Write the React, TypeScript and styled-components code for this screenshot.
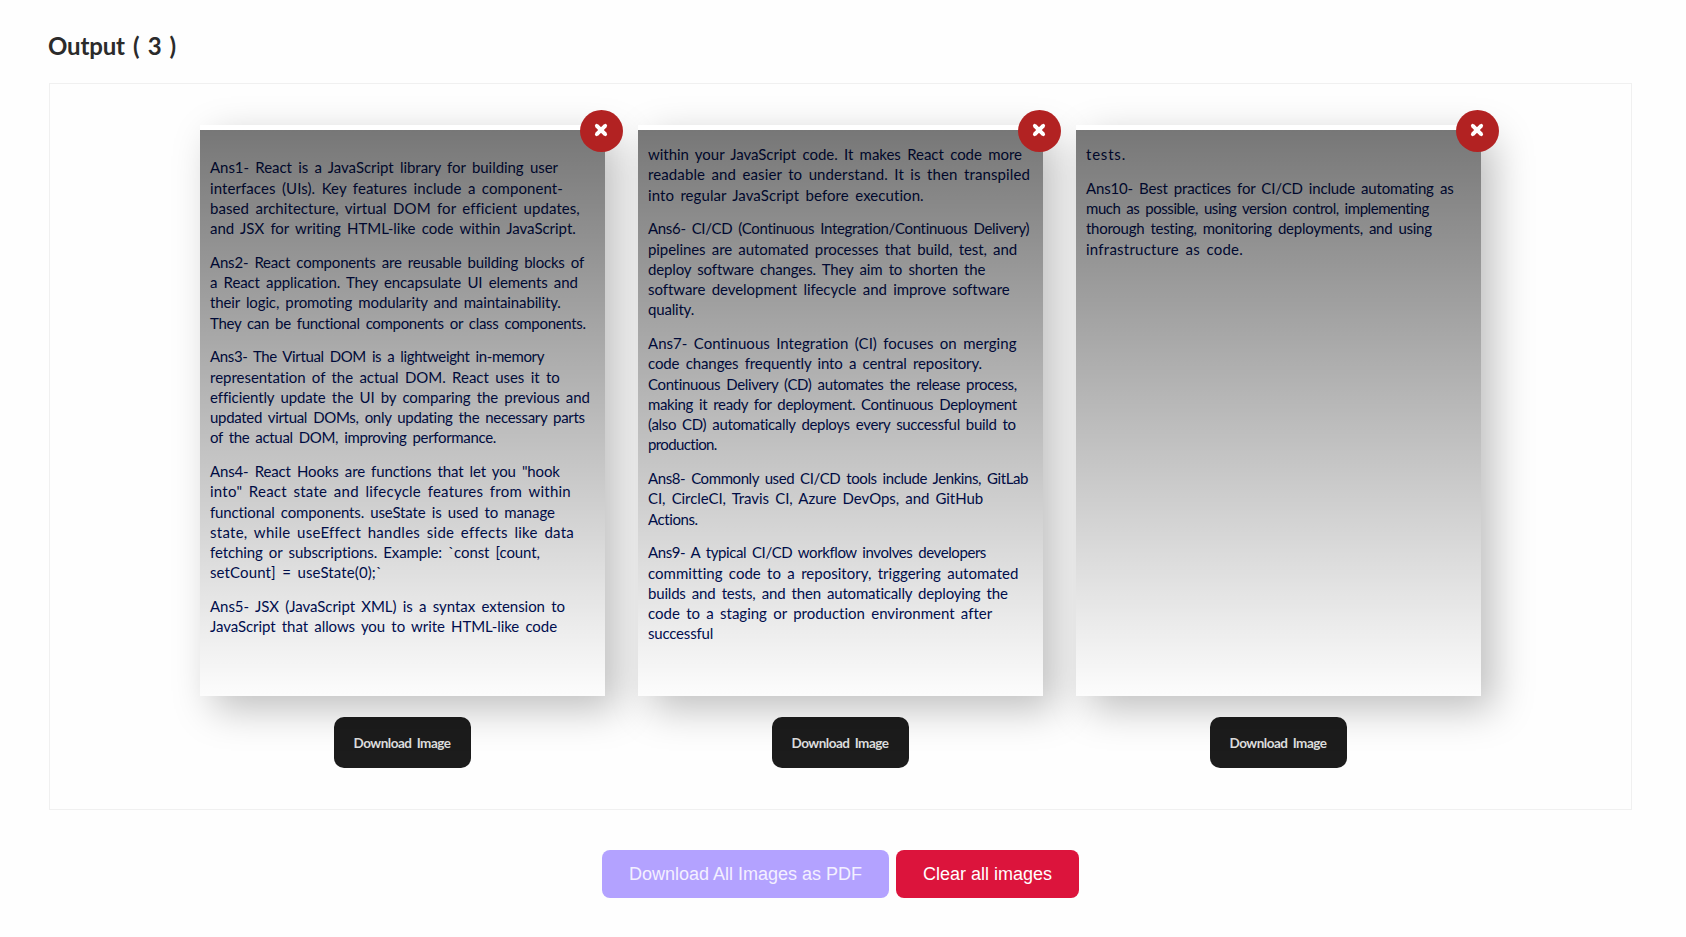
import React, { useLayoutEffect, useRef, useState } from 'react';
import styled, { createGlobalStyle } from 'styled-components';

const handwriting = `Lato, "Liberation Sans", cursive`;

const GlobalStyle = createGlobalStyle`
  * { box-sizing: border-box; }
  body { margin: 0; background: #fefefe; }
`;

const Page = styled.main`
  height: 937px;
  padding: 32px 54px 0 49px;
  overflow: hidden;
`;

const Heading = styled.h2`
  margin: 0 0 0 -1px;
  height: 51px;
  line-height: 28px;
  font-family: ${handwriting};
  font-size: 24px;
  font-weight: 700;
  color: #2b2b2b;
`;

const Panel = styled.section`
  display: flex;
  justify-content: center;
  gap: 33px;
  height: 727px;
  padding-top: 41px;
  border: 1px solid #f0f0f0;
`;

const Card = styled.article`
  position: relative;
  display: flex;
  flex-direction: column;
  align-items: center;
  gap: 21px;
  width: 405px;
`;

const Sheet = styled.div<{ $continued: boolean }>`
  position: relative;
  width: 405px;
  height: 571px;
  padding: ${(p) => (p.$continued ? '19px' : '32.4px')} 10px 0;
  background: #fff;
  box-shadow: 13px 13px 37px rgba(0, 0, 0, 0.25);
  font-family: ${handwriting};
  font-size: 15px;
  line-height: 20.25px;
  color: #000f55;

  &::after {
    content: '';
    position: absolute;
    inset: 5px 0 0;
    background: linear-gradient(rgba(0, 0, 0, 0.535), rgba(0, 0, 0, 0.01));
  }
`;

const Paragraph = styled.p`
  margin: 0 0 13.5px;
`;

const Line = styled.span`
  display: block;
  width: max-content;
  white-space: pre;
  word-spacing: 2.5px;
`;

const RemoveButton = styled.button`
  position: absolute;
  top: -15px;
  right: -17.5px;
  z-index: 2;
  display: flex;
  align-items: center;
  justify-content: center;
  width: 43px;
  height: 42px;
  padding: 0 0 3px;
  border: 0;
  border-radius: 50%;
  background: #b22222;
  color: #fff;
`;

const DownloadButton = styled.button`
  display: flex;
  align-items: center;
  justify-content: center;
  width: 137px;
  height: 51px;
  padding: 1px 1px 0 0;
  border: 0;
  border-radius: 10px;
  background: #1c1c1c;
  color: #dedede;
  font-family: ${handwriting};
  font-size: 13.5px;
  font-weight: 700;
`;

const Actions = styled.div`
  display: flex;
  justify-content: center;
  gap: 7px;
  padding-top: 40px;
`;

const ActionButton = styled.button<{ $width: number; $bg: string; $fg: string }>`
  width: ${(p) => p.$width}px;
  height: 48px;
  padding: 1px 0 0;
  border: 0;
  border-radius: 8px;
  background: ${(p) => p.$bg};
  color: ${(p) => p.$fg};
  font-family: 'Liberation Sans', Arial, sans-serif;
  font-size: 18px;
`;

type Row = [text: string, width: number];

/* Spreads the letters of one written line over the given width. */
function FittedLine({ text, width }: { text: string; width: number }) {
  const ref = useRef<HTMLSpanElement>(null);
  const [spacing, setSpacing] = useState(0);
  useLayoutEffect(() => {
    if (ref.current) {
      ref.current.style.letterSpacing = '0px';
      const natural = ref.current.getBoundingClientRect().width;
      const value = (width - natural) / text.length;
      ref.current.style.letterSpacing = `${value}px`;
      setSpacing(value);
    }
  }, [text, width]);
  return (
    <Line ref={ref} style={{ letterSpacing: spacing }}>
      {text}
    </Line>
  );
}

function CrossIcon() {
  return (
    <svg width="14" height="14" viewBox="0 0 14 14" fill="none" aria-hidden="true">
      <path d="M2.6 2.6 11.4 11.4M11.4 2.6 2.6 11.4" stroke="currentColor" strokeWidth="4" />
      <path
        d="M2.6 2.6 11.4 11.4M11.4 2.6 2.6 11.4"
        stroke="currentColor"
        strokeWidth="3.4"
        strokeLinecap="round"
      />
    </svg>
  );
}

const pages: { continued: boolean; paragraphs: Row[][] }[] = [
  {
    continued: false,
    paragraphs: [
      [
        ['Ans1- React is a JavaScript library for building user', 348],
        ['interfaces (UIs). Key features include a component-', 353],
        ['based architecture, virtual DOM for efficient updates,', 369],
        ['and JSX for writing HTML-like code within JavaScript.', 366],
      ],
      [
        ['Ans2- React components are reusable building blocks of', 374],
        ['a React application. They encapsulate UI elements and', 368],
        ['their logic, promoting modularity and maintainability.', 351],
        ['They can be functional components or class components.', 376],
      ],
      [
        ['Ans3- The Virtual DOM is a lightweight in-memory', 334],
        ['representation of the actual DOM. React uses it to', 350],
        ['efficiently update the UI by comparing the previous and', 379],
        ['updated virtual DOMs, only updating the necessary parts', 375],
        ['of the actual DOM, improving performance.', 286],
      ],
      [
        ['Ans4- React Hooks are functions that let you "hook', 350],
        ['into" React state and lifecycle features from within', 361],
        ['functional components. useState is used to manage', 345],
        ['state, while useEffect handles side effects like data', 363],
        ['fetching or subscriptions. Example: `const [count,', 330],
        ['setCount] = useState(0);`', 172],
      ],
      [
        ['Ans5- JSX (JavaScript XML) is a syntax extension to', 355],
        ['JavaScript that allows you to write HTML-like code', 347],
      ],
    ],
  },
  {
    continued: true,
    paragraphs: [
      [
        ['within your JavaScript code. It makes React code more', 374],
        ['readable and easier to understand. It is then transpiled', 382],
        ['into regular JavaScript before execution.', 276],
      ],
      [
        ['Ans6- CI/CD (Continuous Integration/Continuous Delivery)', 382],
        ['pipelines are automated processes that build, test, and', 369],
        ['deploy software changes. They aim to shorten the', 337],
        ['software development lifecycle and improve software', 361],
        ['quality.', 46],
      ],
      [
        ['Ans7- Continuous Integration (CI) focuses on merging', 369],
        ['code changes frequently into a central repository.', 334],
        ['Continuous Delivery (CD) automates the release process,', 369],
        ['making it ready for deployment. Continuous Deployment', 369],
        ['(also CD) automatically deploys every successful build to', 368],
        ['production.', 69],
      ],
      [
        ['Ans8- Commonly used CI/CD tools include Jenkins, GitLab', 380],
        ['CI, CircleCI, Travis CI, Azure DevOps, and GitHub', 335],
        ['Actions.', 50],
      ],
      [
        ['Ans9- A typical CI/CD workflow involves developers', 338],
        ['committing code to a repository, triggering automated', 370],
        ['builds and tests, and then automatically deploying the', 360],
        ['code to a staging or production environment after', 344],
        ['successful', 65],
      ],
    ],
  },
  {
    continued: true,
    paragraphs: [
      [['tests.', 40]],
      [
        ['Ans10- Best practices for CI/CD include automating as', 368],
        ['much as possible, using version control, implementing', 343],
        ['thorough testing, monitoring deployments, and using', 346],
        ['infrastructure as code.', 157],
      ],
    ],
  },
];

export default function App() {
  return (
    <Page>
      <GlobalStyle />
      <Heading>
        <FittedLine text={`Output ( ${pages.length} )`} width={128} />
      </Heading>
      <Panel>
        {pages.map((page, i) => (
          <Card key={i}>
            <Sheet $continued={page.continued}>
              {page.paragraphs.map((rows, j) => (
                <Paragraph key={j}>
                  {rows.map(([text, width]) => (
                    <FittedLine key={text} text={text} width={width} />
                  ))}
                </Paragraph>
              ))}
            </Sheet>
            <RemoveButton aria-label="Remove image">
              <CrossIcon />
            </RemoveButton>
            <DownloadButton>
              <FittedLine text="Download Image" width={97} />
            </DownloadButton>
          </Card>
        ))}
      </Panel>
      <Actions>
        <ActionButton $width={287} $bg="#b3a2ff" $fg="#f3f0ff">
          Download All Images as PDF
        </ActionButton>
        <ActionButton $width={183} $bg="#dc143c" $fg="#fff">
          Clear all images
        </ActionButton>
      </Actions>
    </Page>
  );
}
